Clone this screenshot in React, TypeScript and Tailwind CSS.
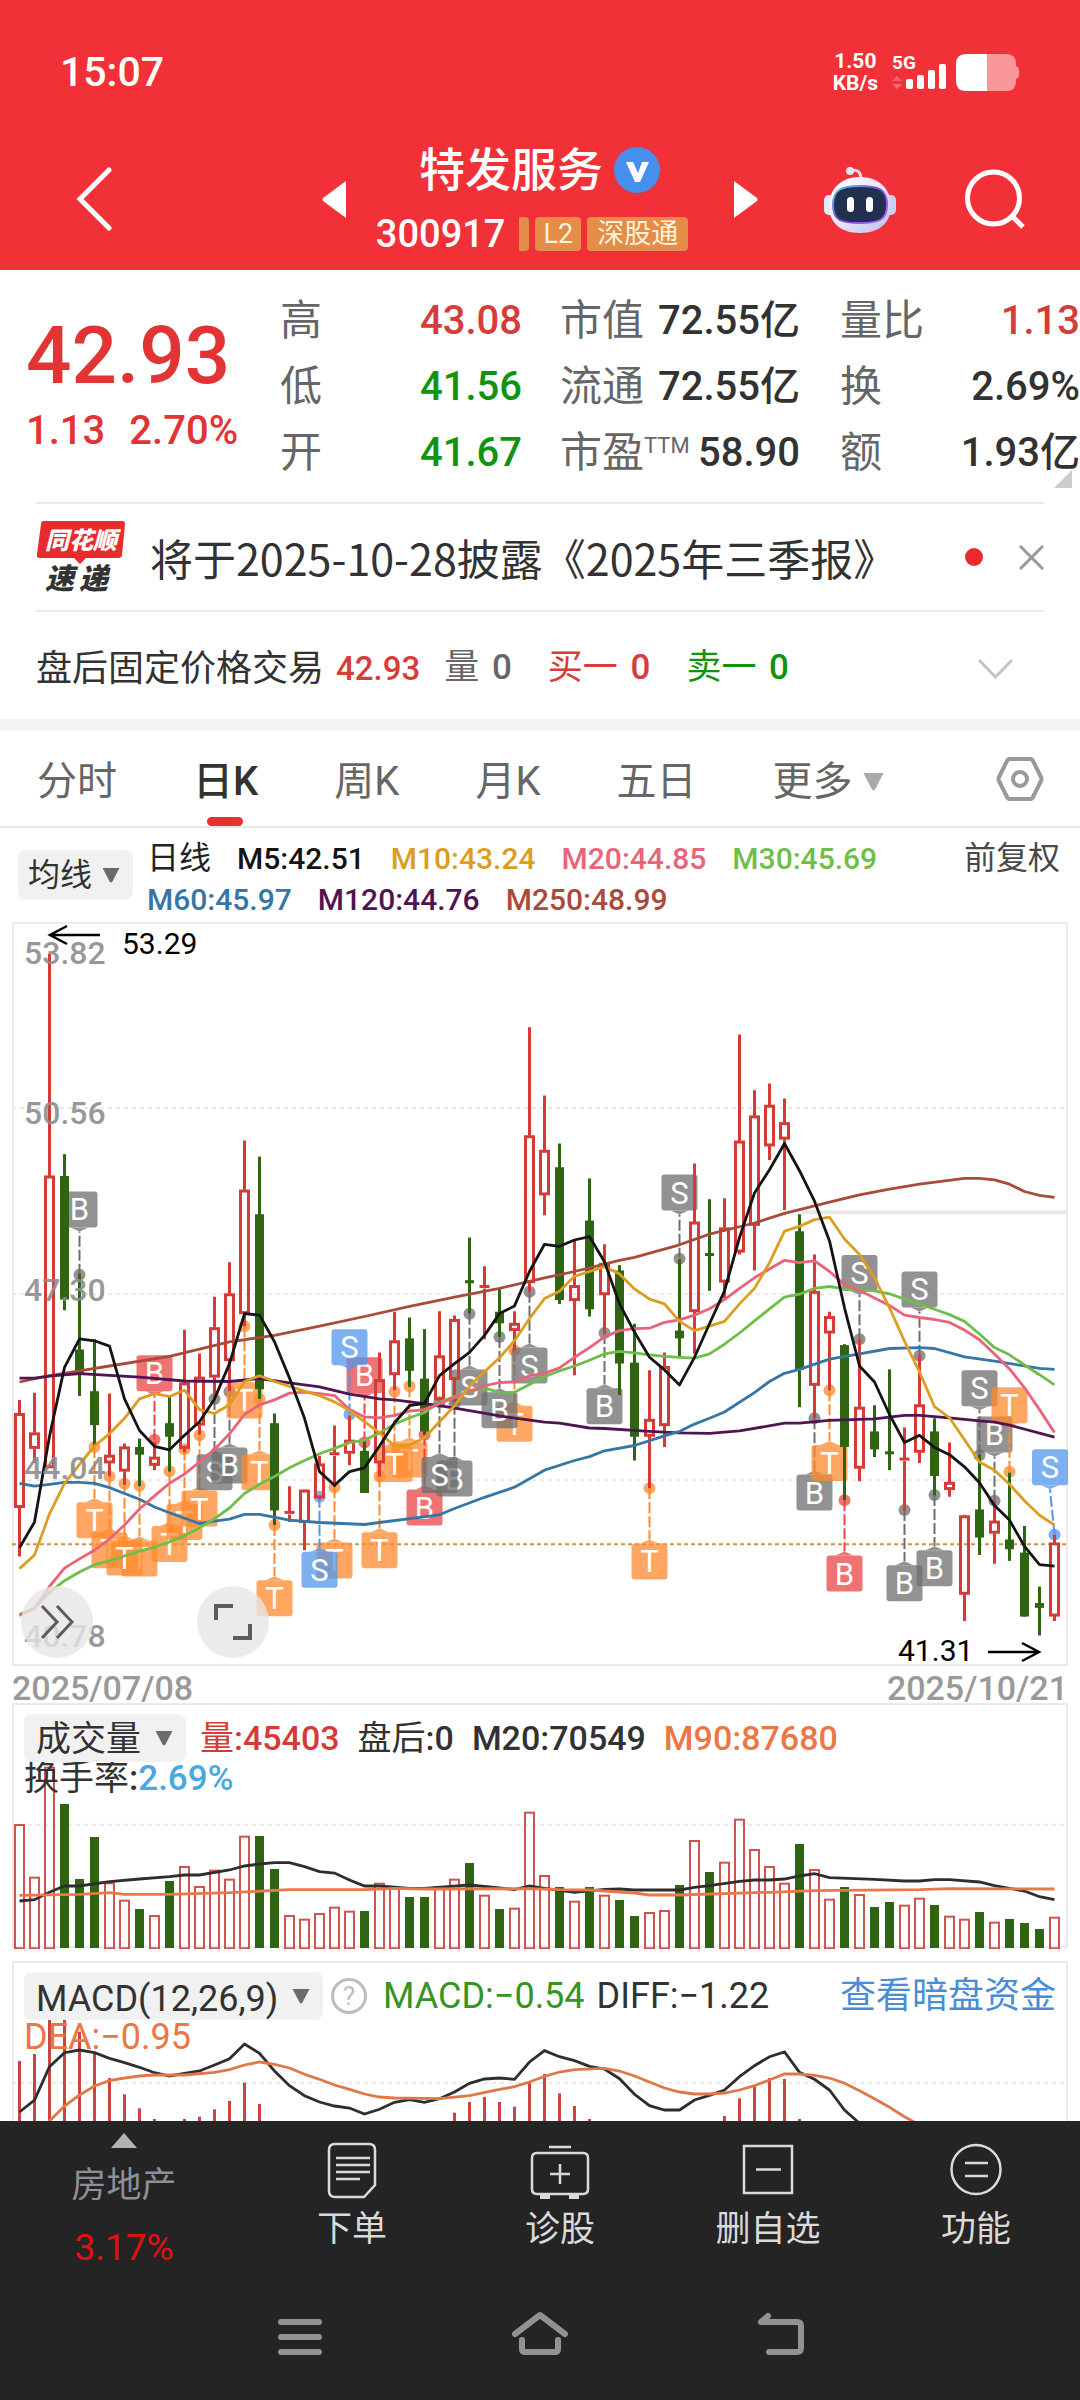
import type { ReactNode } from "react";

type Candle = [up: 0 | 1, high: number, top: number, bottom: number, low: number];
type Point = [index: number, level: number];
type Tag = [index: number, letter: "B" | "S" | "T", color: string, dot: number, box: number];

const GREEN = "#2f6413";
const RED = "#d63a37";
const GRAY = "#6e6e6e";
const ORANGE = "#ff8a2e";
const ROSE = "#ea4545";
const BLUE = "#5196ec";

const xOf = (i: number) => 7.5 + i * 15;
const priceY = (v: number) => (v - 24) * 0.4847;
const volumeY = (v: number) => (v - 129) / 3;
const macdY = (v: number) => (v - 903) / 3;
const pointsOf = (points: Point[], y: (v: number) => number) => points.map(([i, v]) => `${xOf(i)},${y(v).toFixed(1)}`).join(" ");
const series = (levels: number[]): Point[] => levels.map((v, i) => [i, v]);

const candles: Candle[] = [
  [1, 1010, 1038, 1232, 1333], [1, 995, 1078, 1110, 1140], [1, 90, 548, 1150, 1150], [0, 503, 548, 803, 825], [0, 750, 906, 955, 1002],
  [0, 885, 992, 1062, 1105], [1, 997, 1124, 1140, 1168], [1, 1100, 1107, 1157, 1185], [0, 1090, 1107, 1123, 1188], [1, 1097, 1128, 1145, 1155],
  [0, 1000, 1058, 1086, 1158], [1, 865, 975, 1110, 1118], [1, 914, 963, 1062, 1082], [1, 797, 861, 963, 1008], [1, 726, 791, 929, 992],
  [1, 475, 577, 832, 858], [0, 508, 627, 988, 1008], [0, 1038, 1058, 1238, 1268], [1, 1188, 1240, 1244, 1262], [1, 1195, 1196, 1263, 1320],
  [1, 1125, 1142, 1212, 1215], [1, 1063, 1119, 1123, 1190], [1, 1042, 1093, 1120, 1145], [0, 1095, 1115, 1202, 1202], [1, 912, 968, 1140, 1168],
  [1, 828, 888, 958, 990], [0, 840, 883, 950, 983], [0, 864, 966, 1075, 1082], [1, 827, 919, 1010, 1015], [1, 836, 844, 968, 1015],
  [0, 675, 763, 769, 832], [1, 734, 774, 780, 885], [0, 780, 828, 852, 880], [1, 827, 852, 867, 908], [1, 241, 465, 768, 787],
  [1, 382, 495, 587, 629], [0, 481, 530, 804, 812], [1, 680, 774, 805, 959], [0, 553, 640, 823, 838], [1, 689, 728, 793, 872],
  [0, 732, 743, 935, 1000], [0, 853, 933, 1086, 1135], [1, 949, 1050, 1085, 1192], [1, 912, 941, 1063, 1107], [0, 720, 867, 883, 920],
  [1, 522, 643, 828, 915], [0, 596, 707, 713, 785], [1, 594, 655, 767, 800], [1, 256, 476, 705, 710], [1, 371, 424, 650, 743],
  [1, 357, 402, 486, 515], [1, 388, 438, 472, 618], [0, 627, 662, 948, 1025], [1, 710, 786, 980, 1048], [1, 828, 838, 872, 990],
  [0, 895, 897, 1107, 1217], [1, 885, 1025, 1151, 1178], [0, 1021, 1075, 1112, 1128], [0, 947, 1116, 1122, 1155], [1, 1067, 1130, 1134, 1238],
  [1, 918, 1020, 1118, 1140], [0, 1048, 1075, 1167, 1207], [1, 1098, 1180, 1195, 1210], [1, 1247, 1249, 1411, 1466], [0, 1123, 1236, 1294, 1330],
  [1, 1218, 1260, 1285, 1348], [0, 1160, 1298, 1318, 1342], [0, 1270, 1325, 1457, 1457], [0, 1395, 1429, 1439, 1496], [1, 1288, 1305, 1456, 1466],
];

const averages: { color: string; points: Point[] }[] = [
  { color: "#a94a3a", points: [[0, 973], [2, 960], [4, 950], [6, 940], [10, 920], [14, 890], [17, 877], [20, 858], [23, 838], [26, 817], [29, 798], [32, 780], [35, 758], [37, 745], [40, 722], [41, 716], [44, 690], [46, 668], [49, 645], [51, 625], [54, 602], [56, 587], [58, 575], [60, 565], [63, 553], [64, 553], [65, 556], [66, 565], [67, 580], [68, 588], [69, 592]] },
  { color: "#4f1452", points: [[0, 965], [1, 965], [2, 961], [4, 956], [8, 963], [11, 971], [14, 972], [16, 966], [18, 975], [20, 983], [22, 998], [24, 1008], [25, 1010], [28, 1022], [30, 1032], [32, 1043], [35, 1056], [36, 1058], [38, 1068], [39, 1069], [42, 1075], [44, 1078], [46, 1079], [48, 1074], [51, 1058], [52, 1058], [54, 1052], [57, 1049], [59, 1042], [60, 1042], [62, 1047], [64, 1053], [65, 1056], [66, 1062], [69, 1087]] },
  { color: "#3576a6", points: [[0, 1182], [1, 1188], [2, 1184], [3, 1180], [4, 1180], [5, 1182], [6, 1191], [7, 1203], [8, 1215], [9, 1231], [10, 1243], [11, 1254], [12, 1265], [13, 1260], [14, 1256], [15, 1246], [16, 1246], [18, 1258], [20, 1263], [23, 1267], [24, 1263], [28, 1247], [29, 1234], [31, 1211], [33, 1190], [35, 1155], [37, 1135], [38, 1127], [39, 1115], [41, 1104], [43, 1084], [44, 1075], [45, 1060], [46, 1048], [47, 1035], [48, 1015], [49, 995], [50, 972], [51, 955], [52, 947], [54, 926], [56, 915], [58, 904], [60, 902], [61, 904], [63, 921], [65, 930], [68, 945], [69, 947]] },
  { color: "#6fbe4a", points: series([1453, 1440, 1407, 1383, 1365, 1350, 1342, 1332, 1322, 1314, 1303, 1290, 1274, 1255, 1233, 1203, 1184, 1168, 1150, 1135, 1121, 1110, 1098, 1093, 1078, 1060, 1047, 1036, 1015, 1003, 993, 985, 995, 994, 978, 962, 950, 940, 928, 915, 910, 913, 917, 920, 922, 924, 915, 895, 872, 847, 822, 798, 792, 780, 776, 781, 783, 785, 791, 802, 812, 823, 834, 848, 874, 902, 917, 938, 958, 979]) },
  { color: "#e9637b", points: series([1455, 1440, 1395, 1357, 1338, 1320, 1297, 1268, 1235, 1208, 1182, 1163, 1138, 1112, 1080, 1040, 1020, 1010, 996, 994, 997, 1001, 1030, 1045, 1047, 1042, 1033, 1030, 1018, 1005, 992, 981, 974, 973, 960, 955, 944, 922, 902, 880, 867, 863, 862, 850, 845, 835, 822, 803, 780, 758, 740, 722, 727, 723, 745, 772, 784, 800, 815, 835, 840, 844, 850, 866, 886, 915, 946, 985, 1030, 1077]) },
  { color: "#dd9d20", points: series([1358, 1330, 1245, 1182, 1143, 1105, 1080, 1048, 1008, 997, 1003, 990, 1030, 1038, 1020, 972, 960, 972, 982, 992, 1001, 1014, 1032, 1055, 1078, 1105, 1103, 1088, 1055, 1022, 982, 952, 923, 888, 842, 801, 786, 755, 745, 735, 750, 781, 802, 812, 848, 867, 858, 848, 812, 780, 727, 662, 652, 638, 633, 678, 710, 758, 820, 889, 952, 1024, 1047, 1092, 1138, 1155, 1184, 1218, 1248, 1268]) },
  { color: "#141414", points: series([1315, 1262, 1085, 943, 884, 888, 899, 1008, 1073, 1106, 1113, 1083, 1055, 1008, 935, 832, 835, 890, 965, 1048, 1158, 1186, 1158, 1150, 1105, 1057, 1022, 1017, 960, 935, 912, 877, 832, 816, 745, 689, 693, 680, 673, 725, 812, 870, 922, 948, 979, 922, 853, 785, 675, 583, 535, 481, 537, 600, 682, 820, 940, 973, 1040, 1098, 1083, 1108, 1123, 1148, 1181, 1228, 1258, 1312, 1350, 1353]) },
];

const tags: Tag[] = [
  [4, "B", GRAY, 752, 580], [9, "B", ROSE, 1092, 918], [5, "T", ORANGE, 1107, 1221], [6, "T", ORANGE, 1168, 1283], [8, "T", ORANGE, 1187, 1300],
  [7, "T", ORANGE, 1183, 1298], [10, "T", ORANGE, 1157, 1270], [11, "T", ORANGE, 1112, 1225], [12, "T", ORANGE, 1083, 1197], [13, "S", GRAY, 1008, 1122],
  [14, "B", GRAY, 993, 1108], [15, "T", ORANGE, 858, 974], [16, "T", ORANGE, 1008, 1122], [17, "T", ORANGE, 1268, 1382], [21, "T", ORANGE, 1190, 1304],
  [20, "S", BLUE, 1210, 1323], [23, "B", ROSE, 1098, 922], [22, "S", BLUE, 1040, 864], [24, "T", ORANGE, 1168, 1283], [26, "T", ORANGE, 982, 1096],
  [25, "T", ORANGE, 993, 1105], [27, "B", ROSE, 1082, 1195], [29, "B", GRAY, 1018, 1135], [28, "S", GRAY, 1015, 1128], [30, "S", GRAY, 832, 947],
  [33, "T", ORANGE, 908, 1022], [32, "B", GRAY, 880, 994], [34, "S", GRAY, 787, 902], [39, "B", GRAY, 872, 986], [42, "T", ORANGE, 1192, 1306],
  [44, "S", GRAY, 719, 545], [53, "B", GRAY, 1048, 1164], [54, "T", ORANGE, 990, 1103], [55, "B", ROSE, 1217, 1331], [56, "S", GRAY, 885, 711],
  [59, "B", GRAY, 1237, 1351], [60, "S", GRAY, 919, 745], [61, "B", GRAY, 1206, 1320], [64, "S", GRAY, 1124, 949], [65, "B", GRAY, 1218, 1044],
  [66, "T", ORANGE, 1158, 984], [69, "S", BLUE, 1288, 1112],
];

const volumes = [
  492, 650, 320, 432, 657, 531, 667, 719, 747, 765, 663, 618, 678, 629, 656, 527, 528, 627, 765, 776, 759, 740, 752, 753, 668, 684, 711, 711, 678, 656, 609, 704, 747, 743, 455,
  645, 681, 722, 681, 704, 720, 768, 756, 750, 675, 540, 636, 605, 476, 567, 618, 668, 552, 627, 716, 681, 702, 741, 726, 734, 713, 735, 767, 776, 756, 785, 777, 789, 807, 770,
];
const volumeM20: Point[] = [[0, 723], [1, 719], [2, 697], [3, 678], [4, 678], [6, 665], [8, 657], [10, 650], [11, 645], [12, 645], [14, 630], [15, 618], [16, 612], [17, 608], [18, 608], [19, 620], [20, 635], [21, 639], [22, 660], [23, 678], [24, 678], [26, 685], [27, 685], [30, 675], [32, 684], [33, 689], [34, 678], [35, 685], [37, 697], [39, 688], [40, 687], [41, 690], [44, 690], [45, 682], [46, 677], [48, 664], [49, 660], [50, 660], [51, 657], [52, 648], [53, 641], [54, 653], [57, 658], [59, 663], [60, 663], [61, 659], [62, 659], [64, 666], [65, 677], [67, 693], [68, 710], [69, 719]];
const volumeM90: Point[] = [[0, 706], [4, 703], [6, 698], [7, 703], [10, 703], [14, 698], [18, 689], [23, 689], [25, 685], [27, 687], [34, 686], [36, 689], [38, 690], [41, 699], [42, 705], [44, 705], [50, 697], [53, 692], [60, 689], [62, 686], [69, 687]];

const diff = series([1356, 1320, 1220, 1178, 1170, 1178, 1195, 1208, 1222, 1238, 1248, 1240, 1233, 1215, 1196, 1152, 1180, 1233, 1277, 1307, 1326, 1338, 1344, 1362, 1348, 1327, 1319, 1327, 1316, 1296, 1270, 1257, 1254, 1258, 1206, 1172, 1190, 1202, 1219, 1227, 1256, 1303, 1337, 1350, 1350, 1320, 1306, 1290, 1250, 1217, 1190, 1176, 1237, 1258, 1290, 1350, 1390]);
const dea: Point[] = [[1, 1425], [2, 1383], [3, 1338], [4, 1305], [5, 1278], [6, 1262], [7, 1254], [8, 1248], [9, 1245], [11, 1245], [13, 1237], [14, 1229], [15, 1215], [16, 1206], [17, 1213], [18, 1224], [19, 1243], [20, 1258], [21, 1275], [22, 1288], [23, 1302], [24, 1311], [25, 1314], [28, 1316], [30, 1307], [32, 1288], [33, 1280], [34, 1266], [35, 1249], [36, 1236], [37, 1229], [39, 1225], [40, 1233], [41, 1248], [42, 1266], [43, 1284], [44, 1296], [45, 1302], [46, 1302], [47, 1299], [48, 1290], [49, 1277], [50, 1260], [51, 1242], [52, 1242], [53, 1246], [54, 1254], [55, 1270], [56, 1292], [57, 1316], [58, 1342], [59, 1370], [60, 1395]];
const macdBars: Point[] = [[0, 1203], [1, 1182], [2, 1065], [3, 1063], [4, 1115], [5, 1180], [6, 1254], [7, 1303], [8, 1345], [9, 1377], [11, 1377], [12, 1370], [13, 1348], [14, 1323], [15, 1268], [16, 1332], [29, 1358], [30, 1326], [31, 1311], [32, 1326], [33, 1340], [34, 1268], [35, 1242], [36, 1300], [37, 1338], [38, 1377], [47, 1368], [48, 1315], [49, 1277], [50, 1254], [51, 1257], [52, 1377]];

function Down({ className }: { className: string }) {
  return <svg viewBox="0 0 20 16" className={className} aria-hidden="true"><path d="M1 0h18L11.500 14.500q-1.500 2-3 0z" fill="currentColor" /></svg>;
}

function Picker({ label, value, className }: { label: string; value: string; className: string }) {
  return (
    <span className="relative flex shrink-0 items-center">
      <select aria-label={label} className={`appearance-none ${className}`}><option>{value}</option></select>
      <Down className="pointer-events-none absolute right-3 h-[15px] w-5 text-[#6b6b6b]" />
    </span>
  );
}

function StatusBar() {
  return (
    <div className="flex h-[144px] items-center justify-between pl-[60px] pr-[61px]">
      <time className="text-[41px] font-medium leading-none">15:07</time>
      <div className="flex items-center gap-3.5">
        <div className="text-center text-[21px] font-bold leading-[22px]"><div>1.50</div><div>KB/s</div></div>
        <svg viewBox="0 0 54 40" className="h-10 w-[54px]" fill="#fff" role="img" aria-label="5G">
          <text x="0" y="17" fontSize="19" fontWeight="700">5G</text>
          <path d="M5 24l5 5H0zM0 32h10l-5 5z" fill="#f8696e" />
          <rect x="14" y="27" width="7" height="10" rx="2" /><rect x="25" y="23" width="7" height="14" rx="2" /><rect x="36" y="18" width="7" height="19" rx="2" /><rect x="47" y="12" width="7" height="25" rx="2" />
        </svg>
        <svg viewBox="0 0 63 37" className="-ml-1 h-[37px] w-[63px]" aria-hidden="true">
          <path d="M31 0H51q9 0 9 10v2q3 1 3 4v5q0 3-3 4v2q0 10-9 10H31z" fill="#f9979b" />
          <path d="M31 0H10Q0 0 0 10v17q0 10 10 10h21z" fill="#fff" />
        </svg>
      </div>
    </div>
  );
}

function Robot() {
  return (
    <svg viewBox="0 0 72 67" className="h-[67px] w-[72px]" aria-hidden="true">
      <defs>
        <linearGradient id="shell" x1="0" y1="0" x2="1" y2="1"><stop offset="0" stopColor="#fff" /><stop offset=".5" stopColor="#e9e6fb" /><stop offset="1" stopColor="#bdbaf0" /></linearGradient>
        <linearGradient id="rim" x1="0" y1="0" x2="1" y2="1"><stop offset="0" stopColor="#5fd0e8" /><stop offset=".5" stopColor="#7a45d8" /><stop offset="1" stopColor="#a96cf0" /></linearGradient>
      </defs>
      <path d="M26 5q10-3 11 7" fill="none" stroke="#f3dcf0" strokeWidth="3" />
      <circle cx="26" cy="5" r="4" fill="#f7dff0" />
      <rect x="0" y="29" width="12" height="20" rx="5" fill="#e6e6fb" />
      <rect x="60" y="29" width="12" height="20" rx="5" fill="#cfcdf6" />
      <path d="M36 11C56 11 67 24 67 40S56 67 36 67 5 56 5 40 16 11 36 11z" fill="url(#shell)" />
      <path d="M36 20c18 0 27 3 27 19S54 57 36 57 9 55 9 39s9-19 27-19z" fill="#22304f" stroke="url(#rim)" strokeWidth="2" />
      <rect x="23" y="31" width="7" height="15" rx="3.500" fill="#fff" /><rect x="42" y="31" width="7" height="15" rx="3.500" fill="#fff" />
    </svg>
  );
}

function Header() {
  return (
    <header className="bg-[#f23038] text-white">
      <StatusBar />
      <div className="grid h-[126px] grid-cols-[1fr_436px_1fr] items-center pb-4">
        <button aria-label="返回" className="justify-self-start pl-[76px]">
          <svg viewBox="0 0 36 66" className="h-[66px] w-9" fill="none" stroke="#fff" strokeWidth="5" strokeLinecap="round"><path d="M33 4L4 33l29 29" /></svg>
        </button>
        <div className="flex items-center justify-between">
          <button aria-label="上一只"><svg viewBox="0 0 24 37" className="h-[37px] w-6" fill="#fff"><path d="M24 0v37L1 20q-1-1.500 0-3z" /></svg></button>
          <div className="flex flex-col items-center gap-[22px]">
            <h1 className="flex items-center gap-2.5 text-[46px] font-medium leading-[48px]">
              特发服务
              <svg viewBox="0 0 48 48" className="size-12" aria-hidden="true"><circle cx="24" cy="24" r="23" fill="#478fec" /><path d="M13 16h7l5 11 4-11h7l-9 20h-5z" fill="#fff" /></svg>
            </h1>
            <div className="flex h-9 items-center gap-1.5 pr-4 text-[27px] leading-[34px]">
              <span className="mr-2 text-[38px] font-medium">300917</span>
              <span className="h-[34px] w-2.5 rounded-r-sm bg-[#e48c48]" />
              <span className="rounded-sm bg-[#e48c48] px-2 text-[#fff3dc]">L2</span>
              <span className="rounded-sm bg-[#e48c48] px-2.5 text-[#fff3dc]">深股通</span>
            </div>
          </div>
          <button aria-label="下一只"><svg viewBox="0 0 24 37" className="h-[37px] w-6" fill="#fff"><path d="M0 0v37l23-17q1-1.500 0-3z" /></svg></button>
        </div>
        <div className="flex items-center justify-end gap-[69px] pr-[55px]">
          <button aria-label="智能助手"><Robot /></button>
          <button aria-label="搜索"><svg viewBox="0 0 60 60" className="size-[60px]" fill="none" stroke="#fff" strokeWidth="5"><circle cx="28.500" cy="29" r="26" /><path d="M47 47l11 11" /></svg></button>
        </div>
      </div>
    </header>
  );
}

function Stat({ label, value, color = "text-[#323232]" }: { label: ReactNode; value: string; color?: string }) {
  return (
    <div className="flex justify-between whitespace-nowrap leading-[66px]">
      <dt className="text-[42px] text-[#666]">{label}</dt>
      <dd className={`text-[40px] font-medium ${color}`}>{value}</dd>
    </div>
  );
}

function Quote() {
  const red = "text-[#d63c3a]";
  const green = "text-[#12930f]";
  return (
    <section className="relative grid grid-cols-[280fr_280fr_280fr_240fr] pb-4 pt-[18px]">
      <div className="whitespace-nowrap pl-[26px] pt-[26px] font-medium text-[#e23434]">
        <div className="text-[80px] leading-[84px]">42.93</div>
        <div className="flex gap-6 text-[40px] leading-[66px]"><span>1.13</span><span>2.70%</span></div>
      </div>
      <dl className="pr-[38px]"><Stat label="高" value="43.08" color={red} /><Stat label="低" value="41.56" color={green} /><Stat label="开" value="41.67" color={green} /></dl>
      <dl className="pr-10"><Stat label="市值" value="72.55亿" /><Stat label="流通" value="72.55亿" /><Stat label={<>市盈<sup className="top-[-14px] text-[22px]">TTM</sup></>} value="58.90" /></dl>
      <dl><Stat label="量比" value="1.13" color={red} /><Stat label="换" value="2.69%" /><Stat label="额" value="1.93亿" /></dl>
      <svg viewBox="0 0 18 18" className="absolute bottom-3.5 right-2 size-[18px]" aria-hidden="true"><path d="M18 0v18H0z" fill="#ccc" /></svg>
    </section>
  );
}

function News() {
  return (
    <section className="mx-9 flex h-[108px] items-center border-t-2 border-[#ebebeb]">
      <svg viewBox="0 0 90 74" className="h-[74px] w-[90px] shrink-0 overflow-visible" fontStyle="italic" fontWeight="900" aria-label="同花顺速递" role="img">
        <path d="M8 1h78q3 0 3 3l-3 31q0 3-4 3H50l-6 6-6-6H4q-4 0-3-4L5 4q0-3 3-3z" fill="#e62c2e" />
        <text x="9" y="29" fontSize="24" fill="#fff">同花顺</text>
        <text x="9" y="69" fontSize="29" fill="#333">速</text>
        <text x="43" y="69" fontSize="29" fill="#333">递</text>
      </svg>
      <a href="#report" className="ml-6 grow whitespace-nowrap text-[43px] leading-[60px] text-[#323232] [font-family:'Noto_Sans_CJK_SC',sans-serif]">将于2025-10-28披露《2025年三季报》</a>
      <span className="size-[18px] shrink-0 rounded-full bg-[#e62c2e]" />
      <button aria-label="关闭" className="ml-9"><svg viewBox="0 0 25 25" className="size-[25px]" stroke="#999" strokeWidth="3"><path d="M1 1l23 23M24 1L1 24" /></svg></button>
    </section>
  );
}

function AfterHours() {
  return (
    <section className="mx-9 flex h-[109px] items-center border-t-2 border-[#ebebeb] pt-1.5 text-[35px]">
      <h2 className="text-[36px] text-[#323232]">盘后固定价格交易</h2>
      <span className="ml-3 text-[33px] font-medium text-[#d63c3a]">42.93</span>
      <span className="ml-6 text-[#666]">量 <b className="ml-1 font-medium">0</b></span>
      <span className="ml-9 text-[#d63c3a]">买一 <b className="ml-1 font-medium">0</b></span>
      <span className="ml-9 text-[#12930f]">卖一 <b className="ml-1 font-medium">0</b></span>
      <button aria-label="展开" className="ml-auto mr-[31px]"><svg viewBox="0 0 35 20" className="h-5 w-[35px]" fill="none" stroke="#c4c4c4" strokeWidth="3"><path d="M1 1l16.500 17L34 1" /></svg></button>
    </section>
  );
}

function Tabs() {
  return (
    <nav className="flex h-[97px] items-center gap-[76px] whitespace-nowrap border-b-2 border-[#e6e6e6] pl-[37px] pr-9 text-[40px] text-[#666]">
      <button className="pt-1.5">分时</button>
      <button className="relative flex h-full items-center pt-1.5 font-medium text-[#323232]">日K<span className="absolute bottom-0 left-3.5 h-[9px] w-9 rounded-full bg-[#e53130]" /></button>
      <button className="pt-1.5">周K</button>
      <button className="pt-1.5">月K</button>
      <button className="pt-1.5">五日</button>
      <span className="relative flex items-center pt-1.5">
        <select aria-label="更多周期" className="appearance-none pr-8"><option>更多</option></select>
        <Down className="pointer-events-none absolute right-0 h-[18px] w-[23px] text-[#aaa]" />
      </span>
      <button aria-label="设置" className="ml-auto">
        <svg viewBox="0 0 48 46" className="h-[46px] w-12" fill="none" stroke="#999" strokeWidth="4" strokeLinejoin="round"><path d="M14 3h20q2 0 3 2l8 16q1 2 0 4l-8 16q-1 2-3 2H14q-2 0-3-2L3 25q-1-2 0-4L11 5q1-2 3-2z" /><circle cx="24" cy="23" r="7" /></svg>
      </button>
    </nav>
  );
}

function AverageLegend() {
  return (
    <div className="flex h-[94px] items-start pl-[18px] pr-5 pt-2.5">
      <div className="pt-3"><Picker label="指标" value="均线" className="h-[50px] rounded-lg bg-[#f1f1f1] pl-2.5 pr-10 text-[32px] text-[#323232]" /></div>
      <div className="ml-3.5 flex flex-wrap gap-x-[26px] whitespace-nowrap text-[30px] font-medium leading-[41px]">
        <span className="text-[32px] font-normal text-[#222]">日线</span>
        <span className="text-[#141414]">M5:42.51</span>
        <span className="text-[#dd9d20]">M10:43.24</span>
        <span className="text-[#e9637b]">M20:44.85</span>
        <span className="text-[#6fbe4a]">M30:45.69</span>
        <span className="basis-full" />
        <span className="text-[#3576a6]">M60:45.97</span>
        <span className="text-[#4f1452]">M120:44.76</span>
        <span className="text-[#a94a3a]">M250:48.99</span>
      </div>
      <button className="ml-auto whitespace-nowrap text-[32px] leading-[41px] text-[#484848]">前复权</button>
    </div>
  );
}

function TagMark({ tag: [i, letter, color, dot, box] }: { tag: Tag }) {
  const x = xOf(i);
  // the last tag would cross the frame, so it leans left
  const bx = Math.min(x, 1038);
  const top = priceY(box);
  const above = box < dot;
  const edge = above ? top + 36 : top;
  const tip = above ? edge + 4 : edge - 4;
  return (
    <g>
      <line x1={x} y1={priceY(dot)} x2={bx} y2={tip} stroke={color} strokeWidth="2" strokeDasharray="11 3" />
      <g fill={color} opacity="0.75">
        <circle cx={x} cy={priceY(dot)} r="6" />
        <rect x={bx - 18} y={top} width="36" height="36" rx="3" />
        <path d={`M${bx - 9} ${edge}L${bx} ${tip}L${bx + 9} ${edge}z`} />
      </g>
      <text x={bx} y={top + 29} textAnchor="middle" fontSize="31" fill="#fff">{letter}</text>
    </g>
  );
}

function PriceChart() {
  return (
    <div className="relative">
      <svg viewBox="0 0 1056 744" className="block h-auto w-full" role="img" aria-label="日K线">
        <rect x="1" y="1" width="1054" height="742" fill="none" stroke="#ebebeb" strokeWidth="2" />
        {[408, 792, 1176].map((v) => <line key={v} x1="0" x2="1056" y1={priceY(v)} y2={priceY(v)} stroke="#e9e9e9" strokeWidth="2" strokeDasharray="4 4" />)}
        <line x1="790" x2="1056" y1={priceY(623)} y2={priceY(623)} stroke="#e8e8e8" strokeWidth="4" />
        <line x1="0" x2="1056" y1={priceY(1308)} y2={priceY(1308)} stroke="#cf9446" strokeWidth="2" strokeDasharray="4 3" />
        {tags.map((tag) => <TagMark key={tag[0]} tag={tag} />)}
        {candles.map(([up, high, top, bottom, low], i) => {
          const x = xOf(i);
          const y = priceY(top);
          const h = Math.max(priceY(bottom) - y, 3);
          return up ? (
            <g key={i} stroke={RED} strokeWidth="3" fill="none">
              <path d={`M${x} ${priceY(high)}V${y}M${x} ${y + h}V${priceY(low)}`} />
              {h < 5 ? <path d={`M${x - 5} ${y + 1}h10`} /> : <rect x={x - 4} y={y + 1} width="8" height={h - 2} />}
            </g>
          ) : (
            <g key={i} fill={GREEN}>
              <rect x={x - 1.5} y={priceY(high)} width="3" height={priceY(low) - priceY(high)} />
              <rect x={x - 4.5} y={y} width="9" height={h} />
            </g>
          );
        })}
        {averages.map(({ color, points }) => <polyline key={color} points={pointsOf(points, priceY)} fill="none" stroke={color} strokeWidth="2.800" strokeLinejoin="round" />)}
        <g fontSize="32" fontWeight="500" fill="#8a8a8a" fillOpacity="0.9">
          <text x="12" y="42">53.82</text><text x="12" y="202">50.56</text><text x="12" y="379">47.30</text><text x="12" y="557">44.04</text><text x="12" y="725">40.78</text>
        </g>
        <g stroke="#000" strokeWidth="2.500" fill="none"><path d="M88 13H38m17-9L38 13l17 9" /><path d="M976 730h51m-17-9l17 9-17 9" /></g>
        <g fontSize="30"><text x="110" y="32">53.29</text><text x="886" y="739">41.31</text></g>
      </svg>
      <div className="absolute bottom-2 left-[9px] flex gap-[104px]">
        <button aria-label="收起" className="flex size-[72px] items-center justify-center rounded-full bg-[#e6e6e6]/80">
          <svg viewBox="0 0 34 34" className="size-[34px]" fill="none" stroke="#5c5c5c" strokeWidth="3"><path d="M2 1l15 16L2 33M17 1l15 16-15 16" /></svg>
        </button>
        <button aria-label="全屏" className="flex size-[72px] items-center justify-center rounded-full bg-[#e6e6e6]/80">
          <svg viewBox="0 0 38 38" className="size-[38px]" fill="none" stroke="#5c5c5c" strokeWidth="4"><path d="M2 17V3h17M36 21v14H19" /></svg>
        </button>
      </div>
    </div>
  );
}

function VolumeChart() {
  return (
    <div className="relative">
      <svg viewBox="0 0 1056 246" className="block h-auto w-full" role="img" aria-label="成交量">
        <rect x="1" y="1" width="1054" height="243" fill="none" stroke="#ebebeb" strokeWidth="2" />
        <line x1="0" x2="1056" y1={volumeY(494)} y2={volumeY(494)} stroke="#e9e9e9" strokeWidth="2" strokeDasharray="4 4" />
        {volumes.map((v, i) => candles[i][0]
          ? <rect key={i} x={xOf(i) - 4.5} y={volumeY(v) + 1} width="9" height={volumeY(862) - volumeY(v)} fill="none" stroke="#cf5450" strokeWidth="2" />
          : <rect key={i} x={xOf(i) - 4.5} y={volumeY(v)} width="9" height={volumeY(864) - volumeY(v)} fill={GREEN} />)}
        <polyline points={pointsOf(volumeM20, volumeY)} fill="none" stroke="#2e2e2e" strokeWidth="2.800" />
        <polyline points={pointsOf(volumeM90, volumeY)} fill="none" stroke="#ea7745" strokeWidth="2.800" />
      </svg>
      <div className="absolute left-3 right-0 top-[11px] whitespace-nowrap text-[34px] font-medium text-[#323232]">
        <div className="flex h-12 items-center gap-[18px]">
          <Picker label="副图指标" value="成交量" className="h-12 rounded-lg bg-[#f1f1f1] pl-3 pr-11 text-[35px] font-normal" />
          <span className="-ml-1 text-[#d63a37]"><span className="font-normal">量</span>:45403</span>
          <span><span className="font-normal">盘后</span>:0</span>
          <span>M20:70549</span>
          <span className="text-[#ea7745]">M90:87680</span>
        </div>
        <div className="text-[35px] leading-[34px]"><span className="font-normal">换手率</span>:<span className="text-[#4ba7e0]">2.69%</span></div>
      </div>
    </div>
  );
}

function MacdChart() {
  return (
    <div className="relative">
      <svg viewBox="0 0 1056 160" className="block h-auto w-full" role="img" aria-label="MACD">
        <path d="M1 160V1h1054v159" fill="none" stroke="#ebebeb" strokeWidth="2" />
        <line x1="0" x2="1056" y1={macdY(1268)} y2={macdY(1268)} stroke="#e9e9e9" strokeWidth="2" strokeDasharray="4 4" />
        {macdBars.map(([i, v]) => <rect key={i} x={xOf(i) - 1.5} y={macdY(v)} width="3" height={160 - macdY(v)} fill="#cb4441" />)}
        <polyline points={pointsOf(diff, macdY)} fill="none" stroke="#2e2e2e" strokeWidth="2.800" />
        <polyline points={pointsOf(dea, macdY)} fill="none" stroke="#e07748" strokeWidth="2.800" />
      </svg>
      <div className="absolute left-3 right-3 top-[11px] whitespace-nowrap text-[36px] text-[#323232]">
        <div className="flex h-12 items-center gap-2">
          <Picker label="副图指标" value="MACD(12,26,9)" className="h-12 rounded-lg bg-[#f1f1f1] pl-3 pr-11 text-[36px]" />
          <button aria-label="说明" className="flex size-9 shrink-0 items-center justify-center rounded-full border-[3px] border-[#bdbdbd] text-[26px] leading-none text-[#bdbdbd]">?</button>
          <span className="ml-2 text-[#359423]">MACD:−0.54</span>
          <span className="ml-1">DIFF:−1.22</span>
          <a href="#fund" className="ml-auto text-[#4a8cd6]">查看暗盘资金</a>
        </div>
        <div className="leading-[34px] text-[#ea7745]">DEA:−0.95</div>
      </div>
    </div>
  );
}

function NavItem({ label, children }: { label: string; children: ReactNode }) {
  return (
    <button className="flex flex-col items-center gap-1 whitespace-nowrap pt-2 text-[35px] leading-[50px] text-[#dadada]">
      <svg viewBox="0 0 60 60" className="size-[60px]" fill="none" stroke="#dadada" strokeWidth="2.500">{children}</svg>
      {label}
    </button>
  );
}

function BottomBar() {
  return (
    <footer className="bg-[#242424] pb-10 pt-3">
      <div className="grid grid-cols-[248fr_208fr_208fr_208fr_208fr] items-start">
        <a href="#sector" className="flex flex-col items-center text-[35px]">
          <svg viewBox="0 0 26 15" className="h-[15px] w-[26px]" aria-hidden="true"><path d="M13 0l13 15H0z" fill="#b3b3b3" /></svg>
          <span className="mt-3 leading-[52px] text-[#8f8f99]">房地产</span>
          <span className="mt-2 text-[37px] leading-[56px] text-[#e0120f]">3.17%</span>
        </a>
        <NavItem label="下单"><path d="M13 3h34q6 0 6 6v35L42 56H13q-6 0-6-6V9q0-6 6-6z" /><path d="M14 17h34M14 24h34M14 31h34M14 38h24" /></NavItem>
        <NavItem label="诊股"><path d="M7 12h46q5 0 5 5v31q0 5-5 5H7q-5 0-5-5V17q0-5 5-5zM30 23v20M20 33h20M19 6h22" /><path d="M10 56h10M39 56h10" strokeWidth="4" /></NavItem>
        <NavItem label="删自选"><path d="M6 5h48v47H6zM18 28.500h25" /></NavItem>
        <NavItem label="功能"><circle cx="30" cy="28.500" r="24.500" /><path d="M19 22h23M19 35h23" /></NavItem>
      </div>
      <div className="mt-[34px] flex justify-center gap-[180px]">
        <button aria-label="最近任务"><svg viewBox="0 0 60 50" className="h-[50px] w-[60px]" stroke="#929292" strokeWidth="6" strokeLinecap="round"><path d="M11 12h38M11 27h38M11 42h38" /></svg></button>
        <button aria-label="主页"><svg viewBox="0 0 60 50" className="h-[50px] w-[60px]" fill="none" stroke="#929292" strokeWidth="6" strokeLinecap="round" strokeLinejoin="round"><path d="M5 24L30 5l25 19M12 30v9q0 3 3 3h30q3 0 3-3v-9" /></svg></button>
        <button aria-label="返回上级"><svg viewBox="0 0 60 50" className="h-[50px] w-[60px]" fill="none" stroke="#929292" strokeWidth="6" strokeLinecap="round" strokeLinejoin="round"><path d="M18 6L11 12h36q4 0 4 4v22q0 4-4 4H19" /></svg></button>
      </div>
    </footer>
  );
}

export default function App() {
  return (
    <main className="flex min-h-screen w-full flex-col overflow-hidden bg-[#242424] [font-family:Roboto,'Noto_Sans_CJK_SC',sans-serif]">
      <Header />
      <div className="bg-white">
        <Quote />
        <News />
        <AfterHours />
        <div className="h-3 bg-[#f4f4f4]" />
        <Tabs />
        <AverageLegend />
        <section className="px-3">
          <PriceChart />
          <div className="flex h-[37px] items-center justify-between pt-1.5 text-[34px] font-medium leading-none text-[#999]"><time>2025/07/08</time><time>2025/10/21</time></div>
          <VolumeChart />
          <div className="h-3" />
          <MacdChart />
        </section>
      </div>
      <BottomBar />
    </main>
  );
}
